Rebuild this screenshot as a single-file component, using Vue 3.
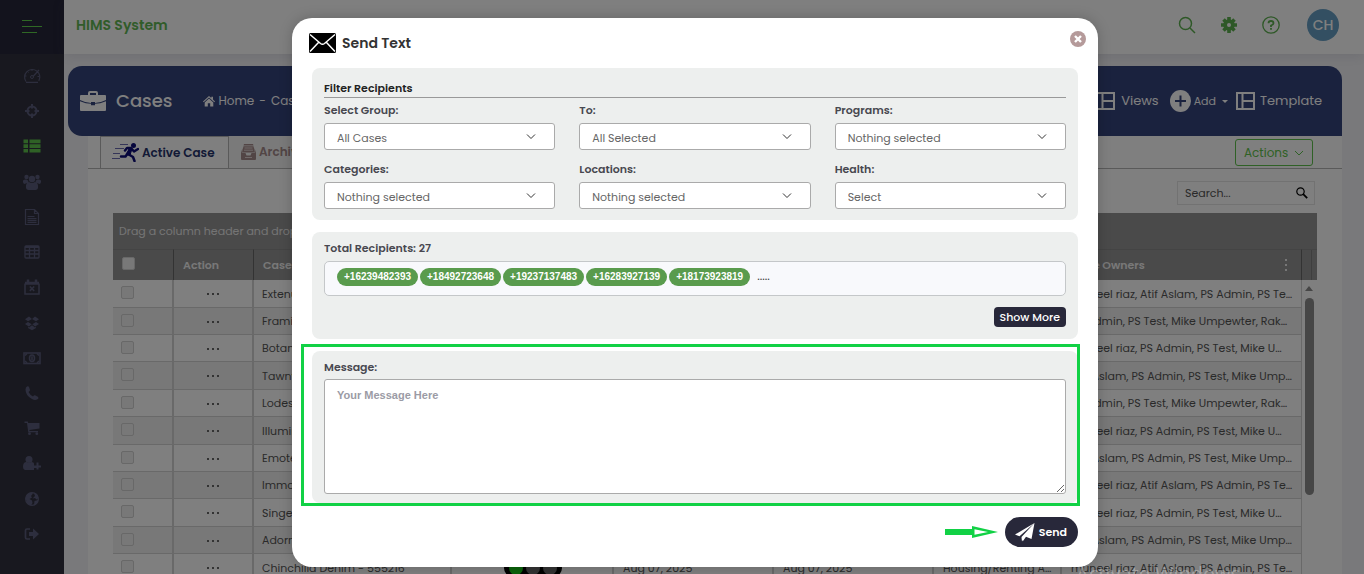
<script setup>
import { ref } from 'vue'

const navItems = [
  { id: 'dashboard', label: 'Dashboard' },
  { id: 'target', label: 'Leads' },
  { id: 'list', label: 'Cases', active: true },
  { id: 'users', label: 'Groups' },
  { id: 'file', label: 'Documents' },
  { id: 'table', label: 'Tables' },
  { id: 'calendar', label: 'Calendar' },
  { id: 'dropbox', label: 'Storage' },
  { id: 'money', label: 'Payments' },
  { id: 'phone', label: 'Calls' },
  { id: 'cart', label: 'Orders' },
  { id: 'useradd', label: 'Add user' },
  { id: 'globe', label: 'Sites' },
  { id: 'logout', label: 'Log out' },
]

const owners = [
  'muneel riaz, Atif Aslam, PS Admin, PS Te…',
  'PS Admin, PS Test, Mike Umpewter, Rak…',
  'muneel riaz, PS Admin, PS Test, Mike U…',
  'Atif Aslam, PS Admin, PS Test, Mike Ump…',
]

const rows = [
  { name: 'Extenuating Denim', owners: owners[0] },
  { name: 'Framing Denim', owners: owners[1] },
  { name: 'Botanic Denim', owners: owners[2] },
  { name: 'Tawny Denim', owners: owners[3] },
  { name: 'Lodestar Denim', owners: owners[1] },
  { name: 'Illuminate Denim', owners: owners[2] },
  { name: 'Emote Denim', owners: owners[3] },
  { name: 'Immortal Denim', owners: owners[0] },
  { name: 'Singer Denim', owners: owners[2] },
  { name: 'Adorn Denim', owners: owners[3] },
  { name: 'Chinchilla Denim - 555216', owners: owners[0] },
]

const filters = [
  { id: 'group', label: 'Select Group:', value: 'All Cases' },
  { id: 'to', label: 'To:', value: 'All Selected' },
  { id: 'programs', label: 'Programs:', value: 'Nothing selected' },
  { id: 'categories', label: 'Categories:', value: 'Nothing selected' },
  { id: 'locations', label: 'Locations:', value: 'Nothing selected' },
  { id: 'health', label: 'Health:', value: 'Select' },
]

const recipients = ['+16239482393', '+18492723648', '+19237137483', '+16283927139', '+18173923819']
const message = ref('')
</script>

<template>
  <div class="app">
    <aside class="sidebar">
      <button class="menu" type="button" aria-label="Menu"><i></i><i></i><i></i></button>
      <nav class="nav">
        <a v-for="item in navItems" :key="item.id" href="#" :aria-label="item.label" :class="{ active: item.active }">
          <svg width="18" height="18" viewBox="0 0 18 18" fill="none" stroke="currentColor">
            <g v-if="item.id === 'dashboard'">
              <path d="M3 14.500a7.600 7.600 0 1 1 12.800-.6M3 15.300h12M10 9.500l6-6.500" stroke-width="1.200" />
              <path d="M9 2.500v1.500M4.500 4.500l1 1M2 9h1.500M14.500 9.500H16" />
              <circle cx="9" cy="10" r="1.500" />
            </g>
            <g v-else-if="item.id === 'target'" stroke-width="2">
              <circle cx="9" cy="9" r="4.500" />
              <path d="M9 2v4.500M9 11.500V16M2 9h4.500M11.500 9H16" />
            </g>
            <path v-else-if="item.id === 'list'" fill="currentColor" stroke="none" d="M.5 2.500H5v3.700H.500zM6.500 2.500h11v3.700h-11zM.5 7.200H5v3.700H.500zM6.500 7.200h11v3.700h-11zM.5 12H5v3.500H.500zM6.500 12h11v3.500h-11z" />
            <g v-else-if="item.id === 'users'" fill="currentColor" stroke="none">
              <circle cx="3.500" cy="4" r="2.200" /><circle cx="14.500" cy="4" r="2.200" /><circle cx="9" cy="6" r="3.200" />
              <path d="M0 7.500q3-2 5.500.5L5 9.500 1.500 11Q0 10.500 0 9zM18 7.500q-3-2-5.500.5l.5 1.500 3.500 1.500q1.500-.5 1.500-2zM3 15q-.5-5.500 3-6 3 2 6 0 3.500.500 3 6-.500 2-2.500 2h-7Q3.500 17 3 15z" />
            </g>
            <g v-else-if="item.id === 'file'" stroke-width="1.200">
              <path d="M2.500 1.500h9l4 4v11h-13zM11.500 1.500v4h4M4.500 8.500h7M4.500 10.700h9M4.500 12.700h9M4.500 14.500h9" />
            </g>
            <g v-else-if="item.id === 'table'" stroke-width="1.300">
              <rect x="2" y="3" width="14" height="12" rx="1" /><path d="M2 4h14" stroke-width="2" /><path d="M2 7.500h14M2 11h14M6.500 4v11M11.500 4v11" />
            </g>
            <g v-else-if="item.id === 'calendar'" stroke-width="1.500">
              <path d="M2 5.500V16h14V5.500M2 4.500h14" /><path d="M2 5.500h14" stroke-width="2.500" /><path d="M5 1.500v3M13 1.500v3" stroke-width="2.500" /><path d="M6.800 8.500l4.400 4.400M11.200 8.500l-4.400 4.400" />
            </g>
            <path v-else-if="item.id === 'dropbox'" fill="currentColor" stroke="none" d="M6 2.500 9 5 5 7.300 2 5.200zM12 2.500 9 5l4 2.300 3-2.100zM5 7.900l3.700 2.400-2.800 2.200L2 10.100zM13 7.900l-3.700 2.400 2.800 2.200 3.900-2.400zM5 12.800l1 .7 3-2.300 3 2.300 1-.7v1.100l-4 2.300-4-2.300z" />
            <g v-else-if="item.id === 'money'">
              <rect x="1" y="4" width="16" height="10.500" stroke-width="1.600" /><ellipse cx="9" cy="9.200" rx="2.500" ry="3.200" stroke-width="1.500" /><path d="M9 7.200v4M2 6.500l2-2M16 6.500l-2-2M2 12l2 2M16 12l-2 2" stroke-width="1.500" />
            </g>
            <path v-else-if="item.id === 'phone'" fill="currentColor" stroke="none" d="M3 3.500Q5 1.500 6 3l1 3Q7 7 5.500 8q1.500 3 4.500 4.500 1.500-2 2.500-1l2.700 1.500q.8 2-1.200 2.500-2 1.200-5-.5Q2.500 11.500 2.500 5.500z" />
            <g v-else-if="item.id === 'cart'" fill="currentColor" stroke="none">
              <path d="M1.500 2.500h3.300l.4 1.500H16.500v5.500L6.300 11l.3 1H15v1.300H5.300L4 4H1.500z" /><circle cx="6.500" cy="14.700" r="1.400" /><circle cx="13.800" cy="14.700" r="1.400" />
            </g>
            <g v-else-if="item.id === 'useradd'" fill="currentColor" stroke="none">
              <circle cx="6" cy="5.500" r="3.500" /><path d="M0 13q0-5 3.500-5 2.500 2 5 0Q11 8 11 9.500v2h2.500v-3h2v3H18v2h-2.500v2h-2v-1.500H11V16H2Q0 15.500 0 13z" />
            </g>
            <g v-else-if="item.id === 'globe'">
              <circle cx="9" cy="9" r="6.300" stroke-width="1.300" /><path fill="currentColor" stroke="none" d="M2.500 8 4 4.500 8 2.500l2 1L8 6l1 1.500L6.500 9 9 10.500l.5 2.500L8 15.500 4.500 14zM11 3l3 1 1.500 4-2 1.500L12 8l-2.500.5L12 6zM11.500 11l4-1-1.500 3.500-3 2z" />
            </g>
            <g v-else>
              <path d="M7 4H4Q2.500 4 2.500 5.500v7Q2.500 14 4 14h3" stroke-width="1.700" /><path fill="currentColor" stroke="none" d="M6 7h4V3.500L16 9l-6 5.500V11H6z" />
            </g>
          </svg>
        </a>
      </nav>
    </aside>

    <div class="main">
      <header class="topbar">
        <span class="brand">HIMS System</span>
        <div class="tools">
          <button type="button" aria-label="Search"><svg width="18" height="18" viewBox="0 0 18 18" fill="none" stroke="currentColor" stroke-width="1.500"><circle cx="7.500" cy="7.500" r="6" /><path d="M12 12l5 5" /></svg></button>
          <button type="button" aria-label="Settings"><svg width="18" height="18" viewBox="-9 -9 18 18"><g stroke="currentColor" stroke-width="3.600"><path d="M0-8v16M-8 0h16M-5.500-5.500 5.500 5.500M5.500-5.500-5.500 5.500" /></g><circle r="5.800" fill="currentColor" /><circle r="2" fill="#fff" /></svg></button>
          <button type="button" aria-label="Help"><svg width="18" height="18" viewBox="0 0 18 18" fill="none" stroke="currentColor" stroke-width="1.300"><circle cx="9" cy="9" r="8.200" /><path d="M6.500 7.200Q6.500 5 9 5t2.500 2.200Q11.500 8.500 9 9.500V11M9 12v1.700" stroke-width="1.800" /></svg></button>
          <span class="avatar">CH</span>
        </div>
      </header>

      <section class="page">
        <div class="hero">
          <svg width="26" height="22" viewBox="0 0 26 22"><path fill="#fff" fill-rule="evenodd" d="M8 5V3q0-2 2-2h6q2 0 2 2v2h7q1 0 1 1v4q-6 3-11 3v-1h-4v1q-5 0-11-3V6q0-1 1-1zm2 0h6V3h-6zM0 11.200q6 2.600 11 2.600v1.500h4v-1.500q5 0 11-2.600V20q0 1-1 1H1q-1 0-1-1z" /></svg>
          <h1>Cases</h1>
          <div class="crumbs">
            <a href="#"><svg width="12" height="11" viewBox="0 0 12 11" fill="#fff"><path d="M6 0l2.300 2V.800H10v2.700l2 1.900-.7.800L6 1.500.7 6.200 0 5.400z" /><path d="M6 2.600l4.300 3.800v4.100H7.200V7.300H4.800v3.200H1.700V6.400z" /></svg>Home</a>
            <span>-</span><span>Cases</span>
          </div>
          <div class="heroactions">
            <a href="#"><svg width="19" height="18" viewBox="0 0 19 18" fill="none" stroke="#fff" stroke-width="2"><path d="M1 1h17v16H1zM6.500 1v16M7 9h11" /></svg>Views</a>
            <button type="button" class="add"><svg width="21" height="22" viewBox="0 0 21 22"><ellipse cx="10.500" cy="11" rx="10.500" ry="11" fill="#fff" /><path d="M10.500 5.500v11M5 11h11" stroke="#34447c" stroke-width="2" /></svg>Add<i class="caret"></i></button>
            <a href="#"><svg width="19" height="18" viewBox="0 0 19 18" fill="none" stroke="#fff" stroke-width="2"><path d="M1 1h17v16H1zM6.500 1v16M7 9h11" /></svg>Template</a>
          </div>
        </div>

        <div class="card">
          <div class="tabs">
            <button type="button" class="tab current">
              <svg width="27" height="19" viewBox="0 0 27 19" fill="none" stroke="#0d0d78"><path d="M8 1.500h8M3 5.500h9M1 10.500h7M0 15.500h8" stroke="#6b6bb0" /><circle cx="21.500" cy="2.500" r="2.500" fill="#0d0d78" stroke="none" /><path d="M18.500 5.500 14.500 12l-1 1.500H9M13 7.500l2-2.500h4l3 3.500 4-2.500M16 11l5 3 1.500 4" stroke-width="2.500" stroke-linejoin="round" stroke-linecap="round" /><path d="M17 6h3l-2 6h-3z" fill="#0d0d78" /></svg>
              Active Case
            </button>
            <button type="button" class="tab archive">
              <svg width="15" height="16" viewBox="0 0 15 16"><path fill="#a58a8a" d="M3 0h9l.5 1.500h-10zM2.500 2.200h10L14 8.500H1z" /><path d="M3.500 4h8M3 6.200h9" stroke="#e0d2d2" /><path fill="#a58a8a" d="M1.500 4 0 9v6q0 1 1 1h13q1 0 1-1V9l-1.500-5 .5 5h-3.500l-1 2.500h-4L4.500 9H1z" /><path d="M4 13.500h7" stroke="#e0d2d2" /></svg>
              Archive
            </button>
            <button type="button" class="actions">Actions<svg width="10" height="6" viewBox="0 0 10 6" fill="none" stroke="currentColor"><path d="M1 1l4 4 4-4" /></svg></button>
          </div>

          <div class="searchrow">
            <div class="search">
              <input type="text" placeholder="Search..." aria-label="Search cases" />
              <svg width="12" height="12" viewBox="0 0 12 12" fill="none" stroke="#000"><circle cx="4.500" cy="4.500" r="3.700" stroke-width="1.200" /><path d="M7.200 7.200l4 4" stroke-width="1.800" /></svg>
            </div>
          </div>

          <div class="grid">
            <div class="groupbar">Drag a column header and drop it here to group by that column</div>
            <div class="gridbody">
              <table>
                <colgroup><col class="c1" /><col class="c2" /><col /><col class="c4" /><col class="c5" /><col class="c5" /><col class="c6" /><col class="c7" /></colgroup>
                <thead>
                  <tr>
                    <th><input type="checkbox" aria-label="Select all" /></th>
                    <th>Action</th><th>Case Name</th><th>Status</th><th>Start Date</th><th>End Date</th><th>Program</th>
                    <th><span class="owner">Case Owners<svg width="3" height="12" viewBox="0 0 3 12" fill="#eee"><path d="M0 0h2v2H0zM0 5h2v2H0zM0 10h2v2H0z" /></svg></span></th>
                  </tr>
                </thead>
                <tbody>
                  <tr v-for="row in rows" :key="row.name">
                    <td><input type="checkbox" :aria-label="'Select ' + row.name" /></td>
                    <td class="center"><button type="button" class="more" aria-label="Row actions"><svg width="12" height="2" viewBox="0 0 12 2" fill="#666"><path d="M0 0h2v2H0zM5 0h2v2H5zM10 0h2v2h-2z" /></svg></button></td>
                    <td>{{ row.name }}</td>
                    <td class="center"><span class="lights"><i class="on"></i><i></i><i></i></span></td>
                    <td>Aug 07, 2025</td>
                    <td>Aug 07, 2025</td>
                    <td>Housing/Renting A…</td>
                    <td>{{ row.owners }}</td>
                  </tr>
                </tbody>
              </table>
              <div class="scroll"><div class="scrollhead"><i></i></div><div class="arrowup"></div><div class="thumb"></div></div>
            </div>
          </div>
        </div>
      </section>
    </div>

    <div class="overlay">
      <div class="modal" role="dialog" aria-labelledby="modal-title">
        <div class="modalhead">
          <svg width="27" height="20" viewBox="0 0 27 20"><rect width="27" height="20" rx="1.500" fill="#000" /><path d="M1 1.500 11.500 10.500q2 1.500 4 0L26 1.500M1 18.500 9.500 9.500M26 18.500 17.500 9.500" fill="none" stroke="#fff" stroke-width="1.500" /></svg>
          <h2 id="modal-title">Send Text</h2>
        </div>
        <button class="close" type="button" aria-label="Close"><svg width="16" height="16" viewBox="0 0 16 16"><circle cx="8" cy="8" r="8" fill="#b59a9a" /><path d="M5 5l6 6M11 5l-6 6" stroke="#fff" stroke-width="2.400" /></svg></button>

        <div class="panel filterpanel">
          <h3>Filter Recipients</h3>
          <div class="filters">
            <div v-for="f in filters" :key="f.id" class="field">
              <label :for="f.id">{{ f.label }}</label>
              <div class="selectbox">
                <select :id="f.id"><option>{{ f.value }}</option></select>
                <svg width="10" height="6" viewBox="0 0 10 6" fill="none" stroke="#333"><path d="M1 .5l4 4 4-4" /></svg>
              </div>
            </div>
          </div>
        </div>

        <div class="panel recipientpanel">
          <div class="label">Total Recipients: 27</div>
          <div class="pills"><span v-for="r in recipients" :key="r" class="pill">{{ r }}</span><span class="dots">.....</span></div>
          <button type="button" class="showmore">Show More</button>
        </div>

        <div class="panel messagepanel">
          <label for="message">Message:</label>
          <textarea id="message" v-model="message" placeholder="Your Message Here"></textarea>
        </div>

        <div class="footer">
          <svg width="53" height="12" viewBox="0 0 53 12"><path fill="#11d145" fill-rule="evenodd" d="M0 3h27V0l26 6-26 6V9H0zM29.500 3.200v5.600L43 6z" /></svg>
          <button type="button" class="send"><svg width="20" height="19" viewBox="0 0 20 19" fill="#fff"><path d="M19.500 0 0 11.500l4.500 1.800zM19.500 0l-3 16-5.500-2.200-3 4.200-1.500-4zM6.500 14.500l2 1-1.500 3z" /></svg>Send</button>
        </div>
      </div>
    </div>
    <div class="watermark">Activate Windows</div>
  </div>
</template>

<style>
body { margin: 0; background: #f3f3f7; }
</style>

<style scoped>
* { box-sizing: border-box; }
.app { display: flex; position: relative; height: 100vh; overflow: hidden; font-family: Poppins, Inter, sans-serif; font-size: 12px; color: #555; background: #f3f3f7; }
button { font: inherit; color: inherit; background: none; border: 0; padding: 0; }
a { color: inherit; text-decoration: none; }
svg { flex: none; display: block; }

.sidebar { flex: none; width: 64px; background: #31313e; color: #5b5d7c; }
.menu { display: flex; flex-direction: column; gap: 5px; justify-content: center; width: 100%; height: 54px; padding: 0 0 1px 22px; background: #26263a; }
.menu i { height: 1px; width: 10px; background: #5fd04a; }
.menu i:nth-child(2) { width: 20px; }
.menu i:nth-child(3) { width: 15px; }
.nav { display: grid; align-content: space-between; justify-items: center; height: 476px; margin-top: 13px; }
.nav .active { color: #5fc34c; }

.main { flex: 1; min-width: 0; }
.topbar { display: flex; align-items: center; justify-content: space-between; height: 54px; padding: 0 25px 4px 12px; background: #fff; box-shadow: 0 2px 12px rgba(60, 60, 90, 0.12); position: relative; }
.brand { font-size: 14px; font-weight: 600; color: #62b855; }
.tools { display: flex; align-items: center; gap: 24px; color: #5db14f; }
.avatar { display: grid; place-items: center; width: 32px; height: 32px; margin-left: 3px; border-radius: 50%; background: #669fc4; color: #fff; font-size: 14px; font-weight: 500; }

.page { padding: 12px 22px 0 4px; }
.hero { display: flex; align-items: center; height: 70px; padding: 0 20px 0 12px; border-radius: 14px 14px 0 14px; background: #34447c; color: #fff; }
h1 { margin: 0 0 0 10px; font-size: 18px; font-weight: 500; line-height: 24px; }
.crumbs { display: flex; gap: 5px; margin-left: 31px; font-size: 12px; }
.crumbs a { display: flex; align-items: center; gap: 3px; }
.heroactions { display: flex; align-items: center; gap: 8px; margin-left: auto; font-size: 13px; }
.heroactions a { display: flex; align-items: center; gap: 6px; }
.heroactions a:last-child { gap: 5px; }
.add { display: flex; align-items: center; gap: 3px; margin-left: 3px; font-size: 11px; }
.caret { margin-left: 3px; border: 3px solid transparent; border-top-color: #fff; border-bottom: 0; }

.card { margin-left: 20px; background: #fff; }
.tabs { display: flex; height: 33px; padding-left: 12px; border-bottom: 1px solid #b4b4b4; }
.tab { display: flex; align-items: center; gap: 3px; padding: 0 12px; font-size: 12px; font-weight: 600; }
.current { width: 129px; padding: 0 0 0 11px; border: 1px solid #b4b4b4; border-bottom: 0; color: #26346c; }
.archive { background: #f4f4f4; color: #a58a8a; }
.actions { display: flex; align-items: center; justify-content: space-between; width: 78px; height: 27px; margin: 3px 29px 0 auto; padding: 0 8px; border: 1px solid #5fc34c; border-radius: 3px; color: #5fc34c; font-size: 12px; }
.searchrow { display: flex; justify-content: flex-end; padding: 12px 27px 8px; }
.search { display: flex; align-items: center; width: 138px; height: 24px; padding: 0 6px 0 7px; border: 1px solid #e4e4e4; }
.search input { flex: 1; min-width: 0; border: 0; padding: 0; font: inherit; font-size: 11px; outline: 0; background: none; }
.search input::placeholder { color: #555; }

.grid { margin: 0 25px; }
.groupbar { height: 36px; padding-left: 6px; line-height: 36px; background: #949494; color: #e9e9e9; font-size: 11px; white-space: nowrap; overflow: hidden; }
.gridbody { display: flex; align-items: flex-start; }
table { flex: 1; width: 100%; border-collapse: separate; border-spacing: 0; table-layout: fixed; font-size: 11px; }
.c1 { width: 61px; }
.c2 { width: 80px; }
.c4 { width: 162px; }
.c5 { width: 160px; }
.c6 { width: 128px; }
.c7 { width: 240px; }
th { height: 31px; padding: 0 9px; background: #949494; border-top: 1px solid #888; border-right: 1px solid #666; color: #f1f1f1; font-size: 11px; font-weight: 600; text-align: left; white-space: nowrap; }
.owner { display: flex; align-items: center; justify-content: space-between; padding-right: 4px; }
td { height: 27px; padding: 1px 8px 0; border-right: 2px solid #d3d3d3; border-bottom: 1px solid #d3d3d3; white-space: nowrap; overflow: hidden; }
td:nth-child(n + 4) { padding-left: 9px; }
th:last-child, td:last-child { border-right-width: 1px; }
tr:nth-child(5n + 1) td, tr:nth-child(5n + 4) td { height: 28px; }
tr:nth-child(even) td { background: #f0f0f0; }
.center { text-align: center; }
.more { display: inline-block; vertical-align: middle; }
table input { display: block; appearance: none; width: 13px; height: 13px; margin: 0 0 3px; border: 1px solid #d0d0d0; border-radius: 2px; background: #f0f0f0; }
.lights { display: inline-flex; gap: 3px; padding: 2px 5px; border-radius: 9px; background: #000; vertical-align: middle; }
.lights i { width: 14px; height: 14px; border-radius: 50%; background: #666; }
.lights .on { background: #16c416; }
.scroll { flex: none; width: 15px; }
.scrollhead { height: 31px; padding-left: 9px; background: #949494; border-top: 1px solid #888; }
.scrollhead i { display: block; width: 1px; height: 30px; background: #7c7c7c; }
.arrowup { width: 8px; margin: 6px 0 0 3px; border: 4px solid transparent; border-bottom: 5px solid #8c8c8c; border-top: 0; }
.thumb { width: 9px; height: 197px; margin: 7px 0 0 3px; border-radius: 5px; background: #8c8c8c; }

.overlay { position: absolute; inset: 0; display: flex; justify-content: center; align-items: flex-start; padding: 18px 0 0 26px; background: rgba(0, 0, 0, 0.5); }
.modal { position: relative; width: 100%; max-width: 806px; padding: 0 20px 20px; border-radius: 20px; background: #fff; box-shadow: 0 0 14px rgba(0, 0, 0, 0.2); color: #444; }
.modalhead { display: flex; align-items: center; gap: 6px; height: 50px; margin-left: -3px; }
h2 { margin: 0; font-size: 14px; font-weight: 600; color: #333; }
.close { position: absolute; top: 13px; right: 12px; }
.panel { margin-bottom: 12px; padding: 8px 12px; border-radius: 8px; background: #edefee; }
.panel label, .label { display: block; font-size: 11px; font-weight: 600; line-height: 16px; color: #484850; }
.filterpanel { padding: 12px 12px 11px; }
h3 { margin: 0 0 4px; padding-bottom: 1px; border-bottom: 1px solid #999; font-size: 11px; font-weight: 600; line-height: 16px; color: #222; }
.filters { display: grid; grid-template-columns: repeat(3, 1fr); gap: 11px 24px; }
.selectbox { position: relative; margin-top: 5px; }
select { display: block; appearance: none; width: 100%; height: 27px; padding: 3px 30px 0 12px; border: 1px solid #aaa; border-radius: 3px; background: #fff; color: #666; font: inherit; font-size: 11px; }
.selectbox svg { position: absolute; right: 19px; top: 11px; }
.pills { display: flex; align-items: flex-start; gap: 2px; height: 35px; margin-top: 5px; padding: 6px 12px; border: 1px solid #c4c7c9; border-radius: 5px; background: #f8f9fc; }
.pill { padding: 0 7px; border-radius: 9px; background: #599b4d; color: #fff; font: bold 10px/18px "Liberation Sans", sans-serif; }
.dots { padding-left: 5px; line-height: 16px; }
.showmore { display: block; height: 20px; margin: 11px 0 0 auto; padding: 0 6px; border-radius: 4px; background: #28283a; color: #fff; font-size: 11px; font-weight: 500; line-height: 20px; }
.recipientpanel { padding-bottom: 12px; }
.messagepanel { position: relative; margin: 0; padding-bottom: 9px; }
.messagepanel::after { content: ''; position: absolute; inset: -7px -2px -3px -11px; border: 3px solid #11d145; pointer-events: none; }
textarea { display: block; width: 100%; height: 115px; margin-top: 4px; padding: 8px 12px; border: 1px solid #aaa; border-radius: 3px; background: #fff; font: bold 11px/15px "Liberation Sans", sans-serif; }
textarea::placeholder { color: #9b9ba5; }
.footer { display: flex; justify-content: flex-end; align-items: center; gap: 7px; margin-top: 14px; }
.send { display: flex; align-items: center; gap: 4px; height: 30px; padding: 0 11px 0 10px; border-radius: 15px; background: #28283a; color: #fff; font-size: 11px; font-weight: 600; }
.watermark { position: absolute; left: 1076px; bottom: -12px; color: rgba(255, 255, 255, 0.3); font: 20px/24px "Open Sans", sans-serif; white-space: nowrap; pointer-events: none; }
</style>
